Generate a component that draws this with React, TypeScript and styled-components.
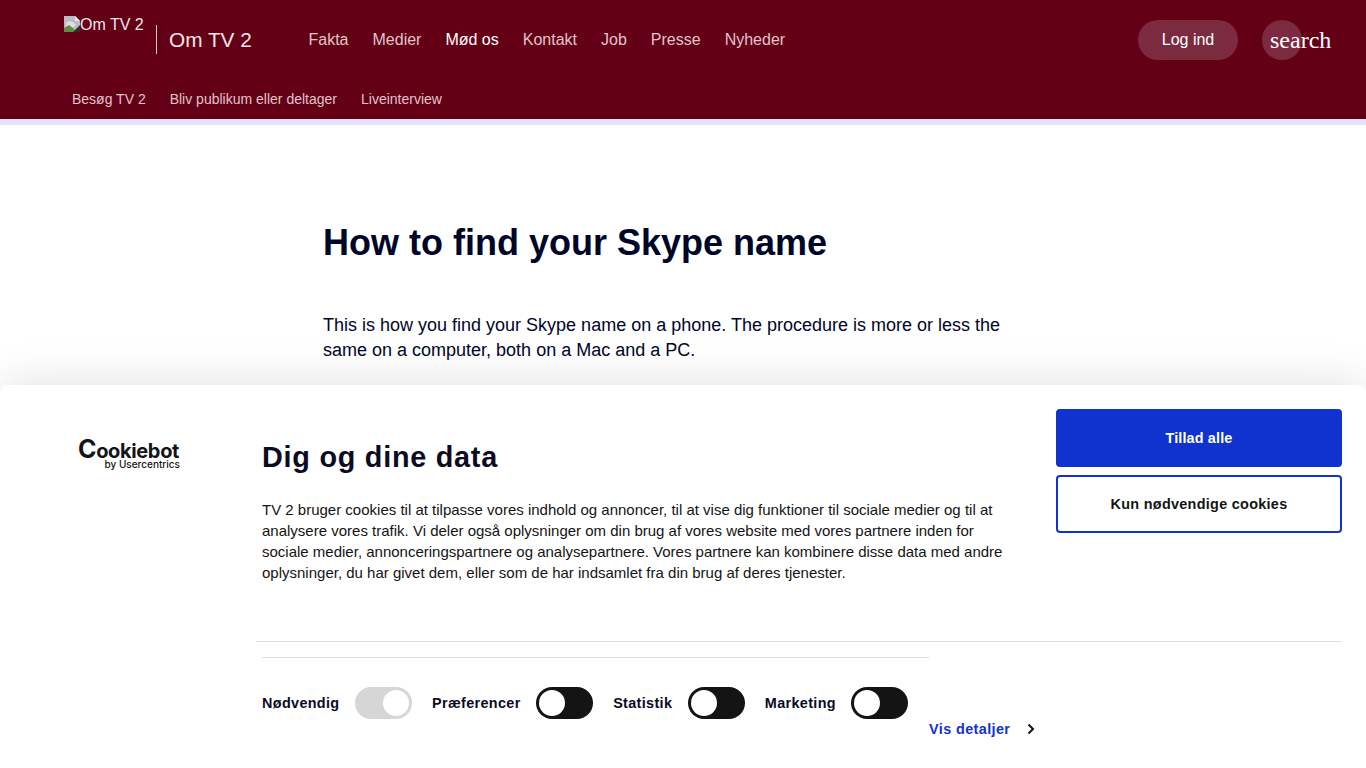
import React from "react"
import styled, { createGlobalStyle } from "styled-components";

const Global = createGlobalStyle`
  html, body { margin: 0; padding: 0; background: #fff; overflow: hidden; }
  body { font-family: "Liberation Sans", Arial, sans-serif; color: #000628; }
  * { box-sizing: border-box; }
`

const Page = styled.div`
  position: relative;
  width: 1366px;
  height: 768px;
  overflow: hidden;
`

const Header = styled.header`
  height: 125px;
  background: #640016;
  border-bottom: 6px solid #e6e0fa;
  display: flex;
  flex-direction: column;
`

const TopRow = styled.div`
  height: 80px;
  display: flex;
  padding: 16px 0 0 64px;
`

const LogoAlt = styled.a`
  display: flex;
  width: 92px;
  height: 30px;
  font-size: 16px;
  line-height: 18px;
  color: #fff;
  opacity: .9;
`

const Title = styled.a`
  align-self: flex-start;
  margin-top: 9px;
  height: 29px;
  border-left: 1px solid #e0c4cb;
  padding-left: 12px;
  font-size: 20.8px;
  line-height: 30px;
  color: #f6e4e8;
  width: 152.5px;
  flex: none;
`

const Nav = styled.nav`
  display: flex;
  gap: 24px;
  margin-top: 15px;
  height: 18px;
`

const NavLink = styled.a<{ $active?: boolean }>`
  font-size: 16px;
  line-height: 18px;
  color: ${(props) => props.$active ? "#fff" : "#e0c4cb"};
`

const Actions = styled.div`
  margin-left: auto;
  margin-top: 4px;
  display: flex;
  gap: 24px;
  width: 228px;
`

const LoginButton = styled.button`
  width: 100px;
  height: 40px;
  border: 0;
  border-radius: 20px;
  background: #7c2a40;
  color: #fff;
  font: 16px/18px "Liberation Sans", Arial, sans-serif;
  padding: 0;
`

const SearchButton = styled.button`
  width: 40px;
  height: 40px;
  border: 0;
  border-radius: 50%;
  background: #7c2a40;
  color: #fff;
  font: 24px/40px "Liberation Serif", "Times New Roman", serif;
  padding: 0 0 0 8px;
  text-align: left;
  white-space: nowrap;
  overflow: visible;
`

const SubNav = styled.nav`
  display: flex;
  gap: 24px;
  padding: 11px 0 0 72px;
`

const SubLink = styled.a`
  font-size: 14px;
  line-height: 16px;
  color: #e0c4cb;
`

const Article = styled.main`
  width: 720px;
  margin-left: 323px;
  padding-top: 97px;
`

const Heading = styled.h1`
  margin: 0;
  font-size: 36px;
  line-height: 42px;
  font-weight: 700;
`

const Lead = styled.p`
  margin: 49px 0 0;
  font-size: 18px;
  line-height: 25px;
  width: 700px;
`

const Dialog = styled.section`
  position: absolute;
  left: 0;
  right: 0;
  bottom: 0;
  height: 383px;
  background: #fff;
  border-radius: 8px 8px 0 0;
  box-shadow: 0 0 48px rgba(0, 0, 0, .13);
  padding: 24px 24px 0 0;
  display: grid;
  grid-template-columns: 256px 1fr 286px;
  grid-template-rows: 233px 1fr;
  color: #0b0b24;
`

const BrandCell = styled.div`
  padding: 29px 0 0 78px;
  color: #141414;
`

const BrandName = styled.div`
  font: 700 20px/22px Inter, "Liberation Sans", sans-serif;
  letter-spacing: -.35px;
  white-space: nowrap;
  &::first-letter {
    font-size: 25px;
  }
`

const BrandSub = styled.div`
  margin-top: -3px;
  font: 500 10px/10px Inter, "Liberation Sans", sans-serif;
  text-align: right;
  width: 102px;
  white-space: nowrap;
`

const Body = styled.div`
  padding: 30px 0 0 6px;
  border-bottom: 1px solid #dedede;
  margin-right: -286px;
`

const DialogTitle = styled.h2`
  margin: 0;
  font-size: 28.8px;
  line-height: 36px;
  font-weight: 700;
  letter-spacing: .75px;
`

const DialogText = styled.p`
  margin: 24px 0 0;
  width: 750px;
  font-size: 15px;
  line-height: 21px;
  color: #141414;
`

const Buttons = styled.div`
  display: flex;
  flex-direction: column;
  gap: 8px;
  position: relative;
`

const ActionButton = styled.button<{ $primary?: boolean }>`
  height: 58px;
  border: 2px solid #1032cf;
  border-radius: 4px;
  background: ${(props) => props.$primary ? "#1032cf" : "#fff"};
  color: ${(props) => props.$primary ? "#fff" : "#141414"};
  font: 700 14.4px/18px "Liberation Sans", Arial, sans-serif;
  letter-spacing: ${(props) => props.$primary ? ".15px" : ".3px"};
`

const FooterRow = styled.div`
  grid-column: 2 / 4;
  padding: 15px 0 0 6px;
  display: flex;
  align-items: flex-start;
`

const Toggles = styled.div`
  width: 667px;
  height: 62px;
  border-top: 1px solid #dedede;
  padding-top: 29px;
  display: flex;
  align-items: center;
`

const ToggleItem = styled.div`
  display: flex;
  align-items: center;
  gap: 15.5px;
  margin-right: 20px;
`

const ToggleLabel = styled.span`
  font-size: 14.4px;
  line-height: 18px;
  font-weight: 700;
  letter-spacing: .35px;
`

const Track = styled.span<{ $disabled?: boolean }>`
  display: block;
  position: relative;
  width: 57px;
  height: 32px;
  border-radius: 16px;
  background: ${(props) => props.$disabled ? "#d6d6d6" : "#141414"};
  &::after {
    content: "";
    position: absolute;
    top: 3px;
    left: ${(props) => props.$disabled ? "28px" : "3px"};
    width: 26px;
    height: 26px;
    border-radius: 50%;
    background: #fff;
  }
`

const Details = styled.a`
  display: flex;
  align-items: center;
  margin-top: 63px;
  color: #1032cf;
  font-size: 14.4px;
  line-height: 18px;
  font-weight: 700;
  letter-spacing: .4px;
  gap: 16px;
`

function BrokenImage() {
  return (
    <svg width="16" height="16" viewBox="0 0 16 16" style={{ flex: "none" }}>
      <path d="M0 0h11l5 5v11H0z" fill="#c3d0d6" />
      <path d="M11 0l5 5h-5z" fill="#fff" />
      <path d="M2 7c2-2 5-2 7-1l3 3-6 5H2z" fill="#f2f5f6" />
      <path d="M0 16v-4l5-3 4 3 3 4z" fill="#5f9e4a" />
      <path d="M9 16l7-7v7z" fill="#3c2d22" />
    </svg>
  )
}

function Toggle({ label, disabled } : { label: string, disabled?: boolean }) {
  return (
    <ToggleItem>
      <ToggleLabel>{label}</ToggleLabel>
      <Track $disabled={disabled} />
    </ToggleItem>
  )
}

const navItems = ["Fakta", "Medier", "Mød os", "Kontakt", "Job", "Presse", "Nyheder"]
const subItems = ["Besøg TV 2", "Bliv publikum eller deltager", "Liveinterview"]

export default function App() {
  return (
    <Page>
      <Global />
      <Header>
        <TopRow>
          <LogoAlt><BrokenImage />Om TV 2</LogoAlt>
          <Title>Om TV 2</Title>
          <Nav>
            {navItems.map((item) => <NavLink key={item} $active={item === "Mød os"}>{item}</NavLink>)}
          </Nav>
          <Actions>
            <LoginButton>Log ind</LoginButton>
            <SearchButton>search</SearchButton>
          </Actions>
        </TopRow>
        <SubNav>
          {subItems.map((item) => <SubLink key={item}>{item}</SubLink>)}
        </SubNav>
      </Header>
      <Article>
        <Heading>How to find your Skype name</Heading>
        <Lead>This is how you find your Skype name on a phone. The procedure is more or less the same on a computer, both on a Mac and a PC.</Lead>
      </Article>
      <Dialog>
        <BrandCell>
          <BrandName>Cookiebot</BrandName>
          <BrandSub>by Usercentrics</BrandSub>
        </BrandCell>
        <Body>
          <DialogTitle>Dig og dine data</DialogTitle>
          <DialogText>TV 2 bruger cookies til at tilpasse vores indhold og annoncer, til at vise dig funktioner til sociale medier og til at analysere vores trafik. Vi deler også oplysninger om din brug af vores website med vores partnere inden for sociale medier, annonceringspartnere og analysepartnere. Vores partnere kan kombinere disse data med andre oplysninger, du har givet dem, eller som de har indsamlet fra din brug af deres tjenester.</DialogText>
        </Body>
        <Buttons>
          <ActionButton $primary>Tillad alle</ActionButton>
          <ActionButton>Kun nødvendige cookies</ActionButton>
        </Buttons>
        <FooterRow>
          <Toggles>
            <Toggle label="Nødvendig" disabled />
            <Toggle label="Præferencer" />
            <Toggle label="Statistik" />
            <Toggle label="Marketing" />
          </Toggles>
          <Details>
            Vis detaljer
            <svg width="10" height="12" viewBox="0 0 10 12" fill="none">
              <path d="M2.5 1.5L7 6l-4.5 4.5" stroke="#141414" strokeWidth="2" />
            </svg>
          </Details>
        </FooterRow>
      </Dialog>
    </Page>
  )
}
